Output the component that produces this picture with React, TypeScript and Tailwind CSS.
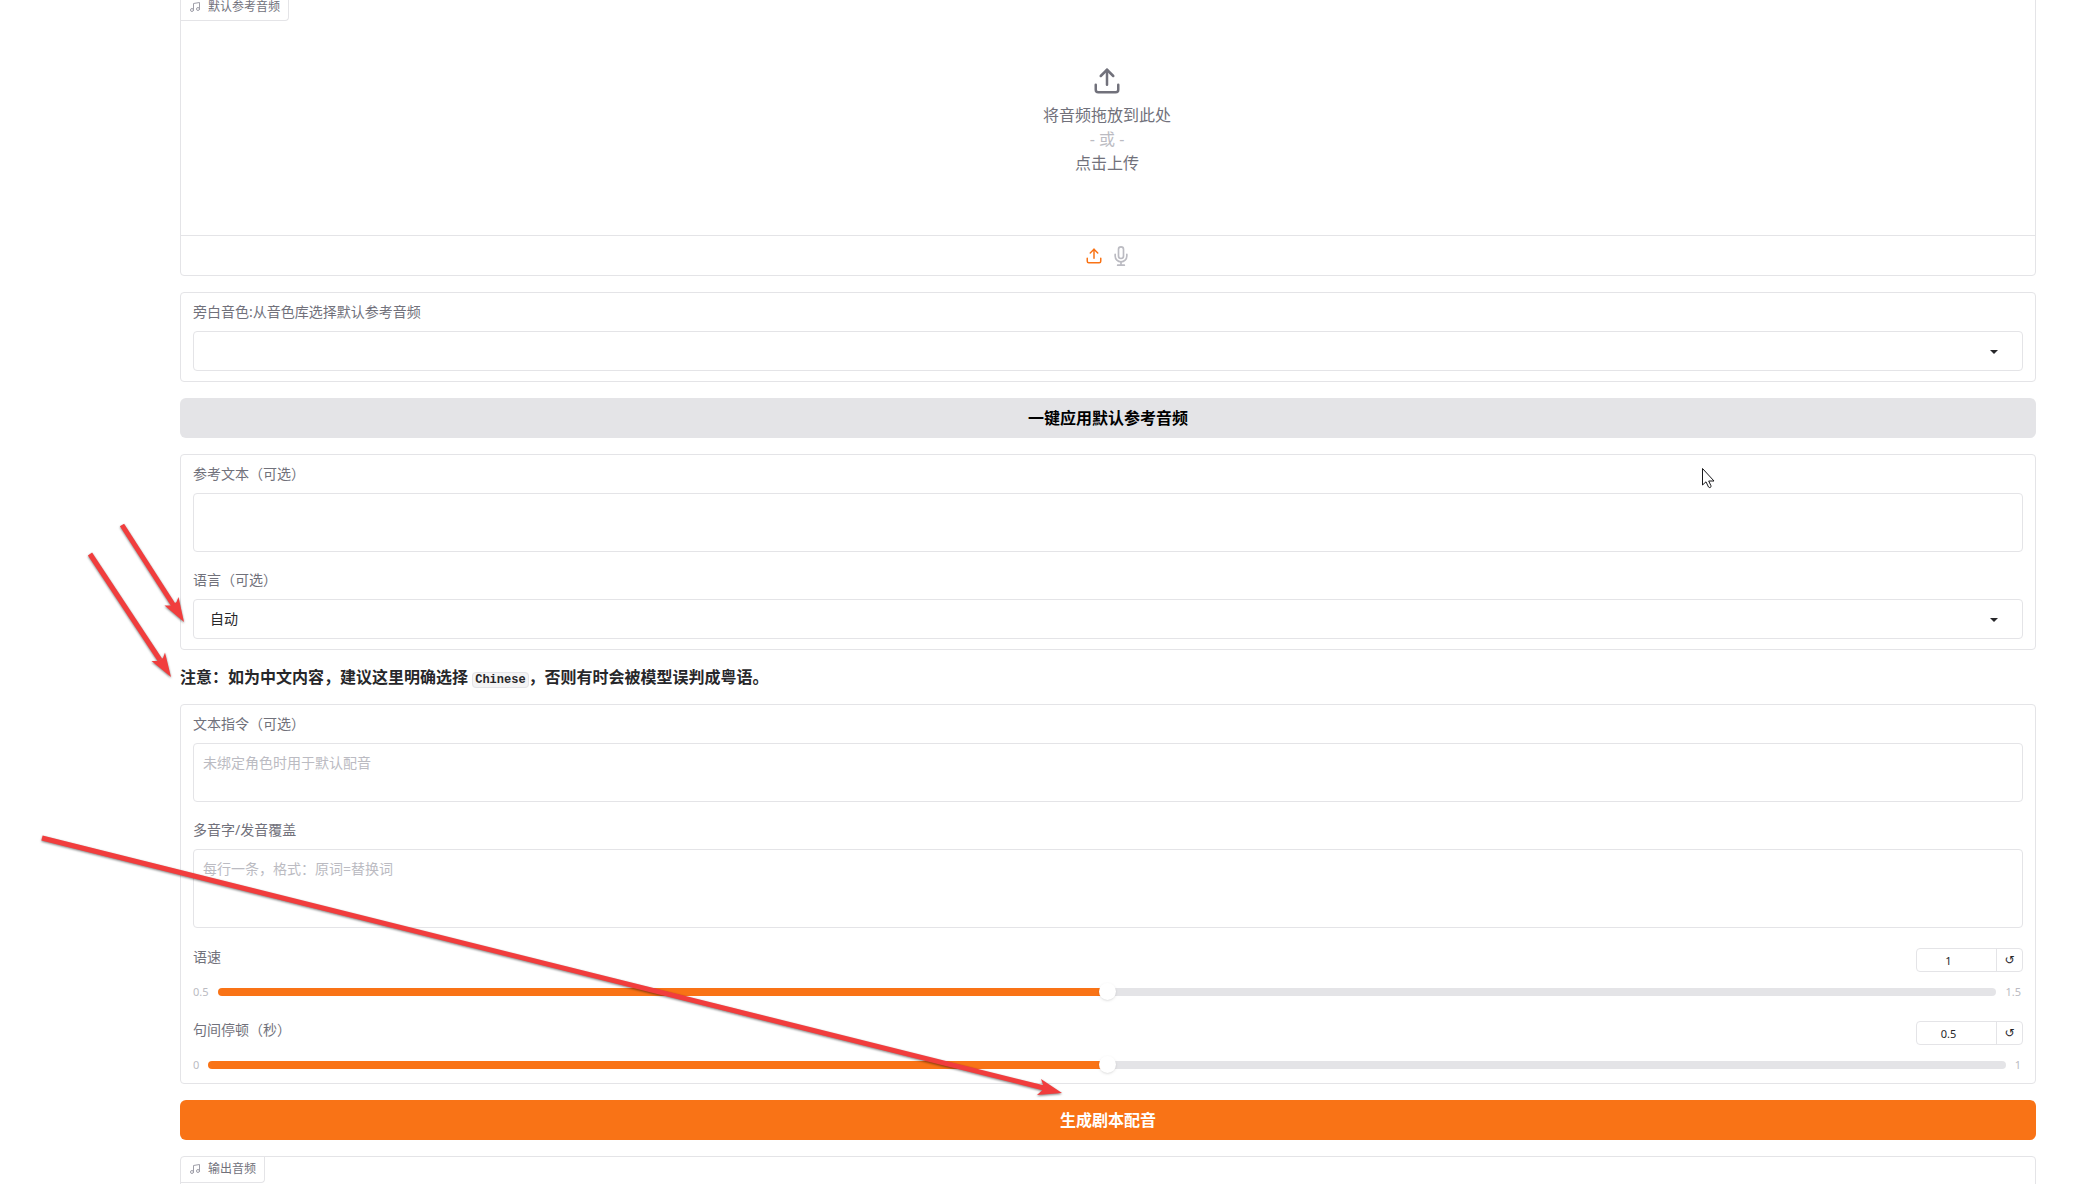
import type { ReactNode } from "react";
import { useState } from "react";

function UploadIcon({ className }: { className: string }) {
  return (
    <svg className={className} viewBox="0 0 24 24" fill="none" stroke="currentColor" strokeWidth="2" strokeLinecap="round" strokeLinejoin="round" aria-hidden="true">
      <path d="M21 15v4a2 2 0 0 1-2 2H5a2 2 0 0 1-2-2v-4" />
      <polyline points="17 8 12 3 7 8" />
      <line x1="12" y1="3" x2="12" y2="15" />
    </svg>
  );
}

function MicIcon({ className }: { className: string }) {
  return (
    <svg className={className} viewBox="0 0 24 24" fill="none" stroke="currentColor" strokeWidth="2" strokeLinecap="round" strokeLinejoin="round" aria-hidden="true">
      <path d="M12 1a3 3 0 0 0-3 3v8a3 3 0 0 0 6 0V4a3 3 0 0 0-3-3z" />
      <path d="M19 10v2a7 7 0 0 1-14 0v-2" />
      <line x1="12" y1="19" x2="12" y2="23" />
      <line x1="8" y1="23" x2="16" y2="23" />
    </svg>
  );
}

function MusicIcon() {
  return (
    <svg className="size-3 text-zinc-400" viewBox="0 0 24 24" fill="none" stroke="currentColor" strokeWidth="2" strokeLinecap="round" strokeLinejoin="round" aria-hidden="true">
      <path d="M9 18V5l12-2v13" />
      <circle cx="6" cy="18" r="3" />
      <circle cx="18" cy="16" r="3" />
    </svg>
  );
}

function Panel({ children }: { children: ReactNode }) {
  return <section className="rounded border border-[#e4e4e7] bg-white">{children}</section>;
}

function AudioLabel({ children }: { children: ReactNode }) {
  return (
    <h2 className="flex h-[26px] w-fit items-center gap-[7px] rounded-br border-r border-b border-[#e4e4e7] px-2 pb-px text-xs text-zinc-500">
      <MusicIcon />
      {children}
    </h2>
  );
}

function FieldLabel({ htmlFor, children }: { htmlFor: string; children: ReactNode }) {
  return (
    <label htmlFor={htmlFor} className="block text-sm leading-5 text-zinc-500">
      {children}
    </label>
  );
}

function SelectField({ id, label, options }: { id: string; label: string; options: string[] }) {
  return (
    <div className="px-3 pt-[9px] pb-[10px]">
      <FieldLabel htmlFor={id}>{label}</FieldLabel>
      <div className="relative mt-[9px]">
        <select id={id} className="block h-10 w-full appearance-none rounded border border-[#e4e4e7] bg-white px-4 text-sm text-zinc-800">
          {options.map((o) => (
            <option key={o}>{o}</option>
          ))}
        </select>
        <svg className="pointer-events-none absolute top-3 right-5 size-[18px] fill-zinc-800" viewBox="0 0 18 18" aria-hidden="true">
          <path d="M5 7l4 4 4-4z" />
        </svg>
      </div>
    </div>
  );
}

function TextField({ id, label, placeholder, rows }: { id: string; label: string; placeholder?: string; rows: 2 | 3 }) {
  return (
    <div className="px-3 py-[9px]">
      <FieldLabel htmlFor={id}>{label}</FieldLabel>
      <textarea
        id={id}
        rows={rows}
        placeholder={placeholder}
        className="mt-[9px] block w-full resize-none rounded border border-[#e4e4e7] bg-white px-[9px] pt-[9px] pb-2 text-sm leading-5 text-zinc-800 placeholder:text-[#bbbbc2]"
      />
    </div>
  );
}

function SliderField({ id, label, min, max, initial }: { id: string; label: string; min: number; max: number; initial: number }) {
  const [value, setValue] = useState(initial);
  const filled = ((value - min) / (max - min)) * 100;
  return (
    <div className="px-3 py-[10px]">
      <div className="flex items-start justify-between">
        <FieldLabel htmlFor={id}>{label}</FieldLabel>
        <div className="mt-px flex h-6 overflow-hidden rounded border border-[#e4e4e7]">
          <input
            type="number"
            aria-label={label}
            value={value}
            min={min}
            max={max}
            step={0.05}
            onChange={(e) => setValue(Number(e.target.value))}
            className="w-[79px] appearance-none pt-[2px] pr-4 text-center text-[11px] text-zinc-800 [&::-webkit-inner-spin-button]:appearance-none"
          />
          <button type="button" aria-label="重置" onClick={() => setValue(initial)} className="w-[26px] border-l border-[#e4e4e7] font-['DejaVu_Sans'] text-xs leading-5 text-zinc-800">
            ↺
          </button>
        </div>
      </div>
      <div className="mt-3 flex h-4 items-center gap-[9px] text-[11px] text-[#bbbbc2]">
        <span>{min}</span>
        <input
          id={id}
          type="range"
          value={value}
          min={min}
          max={max}
          step={0.05}
          onChange={(e) => setValue(Number(e.target.value))}
          style={{ backgroundImage: `linear-gradient(to right, #f97316 ${filled}%, #e4e4e7 ${filled}%)` }}
          className="h-2 min-w-0 flex-1 appearance-none rounded-full [&::-webkit-slider-thumb]:-mt-[2px] [&::-webkit-slider-thumb]:size-[17px] [&::-webkit-slider-thumb]:appearance-none [&::-webkit-slider-thumb]:rounded-full [&::-webkit-slider-thumb]:bg-white [&::-webkit-slider-thumb]:shadow-sm"
        />
        <span className="pr-[2px]">{max}</span>
      </div>
    </div>
  );
}

function Annotations() {
  return (
    <svg className="pointer-events-none absolute top-0 left-0 h-[1184px] w-[2079px]" viewBox="0 0 2079 1184" aria-hidden="true">
      <g className="drop-shadow-[0_1px_1px_rgba(0,0,0,0.5)]" fill="#f13d3d" stroke="#f13d3d">
        <g strokeWidth="5">
          <line x1="122" y1="525" x2="174" y2="606" />
          <line x1="90" y1="554" x2="160" y2="660" />
          <line x1="42" y1="838" x2="1044" y2="1088" />
        </g>
        <g stroke="none">
          <path d="M184 622L164.500 605.500L171.500 605.500L176.500 602L178.500 597z" />
          <path d="M171 677L151.500 661L158.500 661L163 658L165 652.500z" />
          <path d="M1062 1093L1037 1095L1042 1090.500L1043 1084.500L1041 1079z" />
        </g>
      </g>
      <path d="M1702.500 468.500v16.500l3.500-3.200 2.500 5.200c.6 1.200 3.200.4 2.500-1.200l-2.300-4.800h5.300z" fill="#fff" stroke="#18181b" strokeWidth="1" />
    </svg>
  );
}

export default function App() {
  return (
    <main lang="zh-CN" className="relative h-screen overflow-hidden bg-white pr-[43px] pl-[180px] font-['Noto_Sans','Noto_Sans_CJK_SC',sans-serif]">
      <div className="-mt-[6px] flex flex-col gap-4">
        <Panel>
          <AudioLabel>默认参考音频</AudioLabel>
          <button type="button" className="flex h-[214px] w-full flex-col items-center pt-[45px] pr-[2px] text-base leading-6 text-zinc-500">
            <UploadIcon className="mb-[7px] size-[30px]" />
            <span>将音频拖放到此处</span>
            <span className="text-[#bbbbc2]">- 或 -</span>
            <span>点击上传</span>
          </button>
          <div className="flex h-10 items-center justify-center gap-2 border-t border-[#e4e4e7]">
            <button type="button" aria-label="上传" className="text-[#f97316]">
              <UploadIcon className="size-[18px]" />
            </button>
            <button type="button" aria-label="录音" className="text-[#bbbbc2]">
              <MicIcon className="size-5 overflow-visible" />
            </button>
          </div>
        </Panel>

        <Panel>
          <SelectField id="voice" label="旁白音色:从音色库选择默认参考音频" options={[""]} />
        </Panel>

        <button type="button" className="h-10 rounded-md bg-[#e4e4e7] text-base font-bold text-black">
          一键应用默认参考音频
        </button>

        <Panel>
          <TextField id="ref-text" label="参考文本（可选）" rows={2} />
          <SelectField id="language" label="语言（可选）" options={["自动", "Chinese"]} />
        </Panel>

        <p className="-my-px h-6 text-base leading-6 font-bold text-zinc-800">
          注意：如为中文内容，建议这里明确选择{" "}
          <code className="rounded-sm border border-[#e4e4e7] bg-zinc-100 px-[2px] font-['Liberation_Mono',monospace] text-xs">Chinese</code>
          ，否则有时会被模型误判成粤语。
        </p>

        <Panel>
          <TextField id="instruction" label="文本指令（可选）" placeholder="未绑定角色时用于默认配音" rows={2} />
          <TextField id="pronunciation" label="多音字/发音覆盖" placeholder="每行一条，格式：原词=替换词" rows={3} />
          <SliderField id="speed" label="语速" min={0.5} max={1.5} initial={1} />
          <SliderField id="pause" label="句间停顿（秒）" min={0} max={1} initial={0.5} />
        </Panel>

        <button type="button" className="h-10 rounded-md bg-[#f97316] text-base font-bold text-white">
          生成剧本配音
        </button>

        <Panel>
          <AudioLabel>输出音频</AudioLabel>
          <div className="h-40" />
        </Panel>
      </div>
      <Annotations />
    </main>
  );
}
